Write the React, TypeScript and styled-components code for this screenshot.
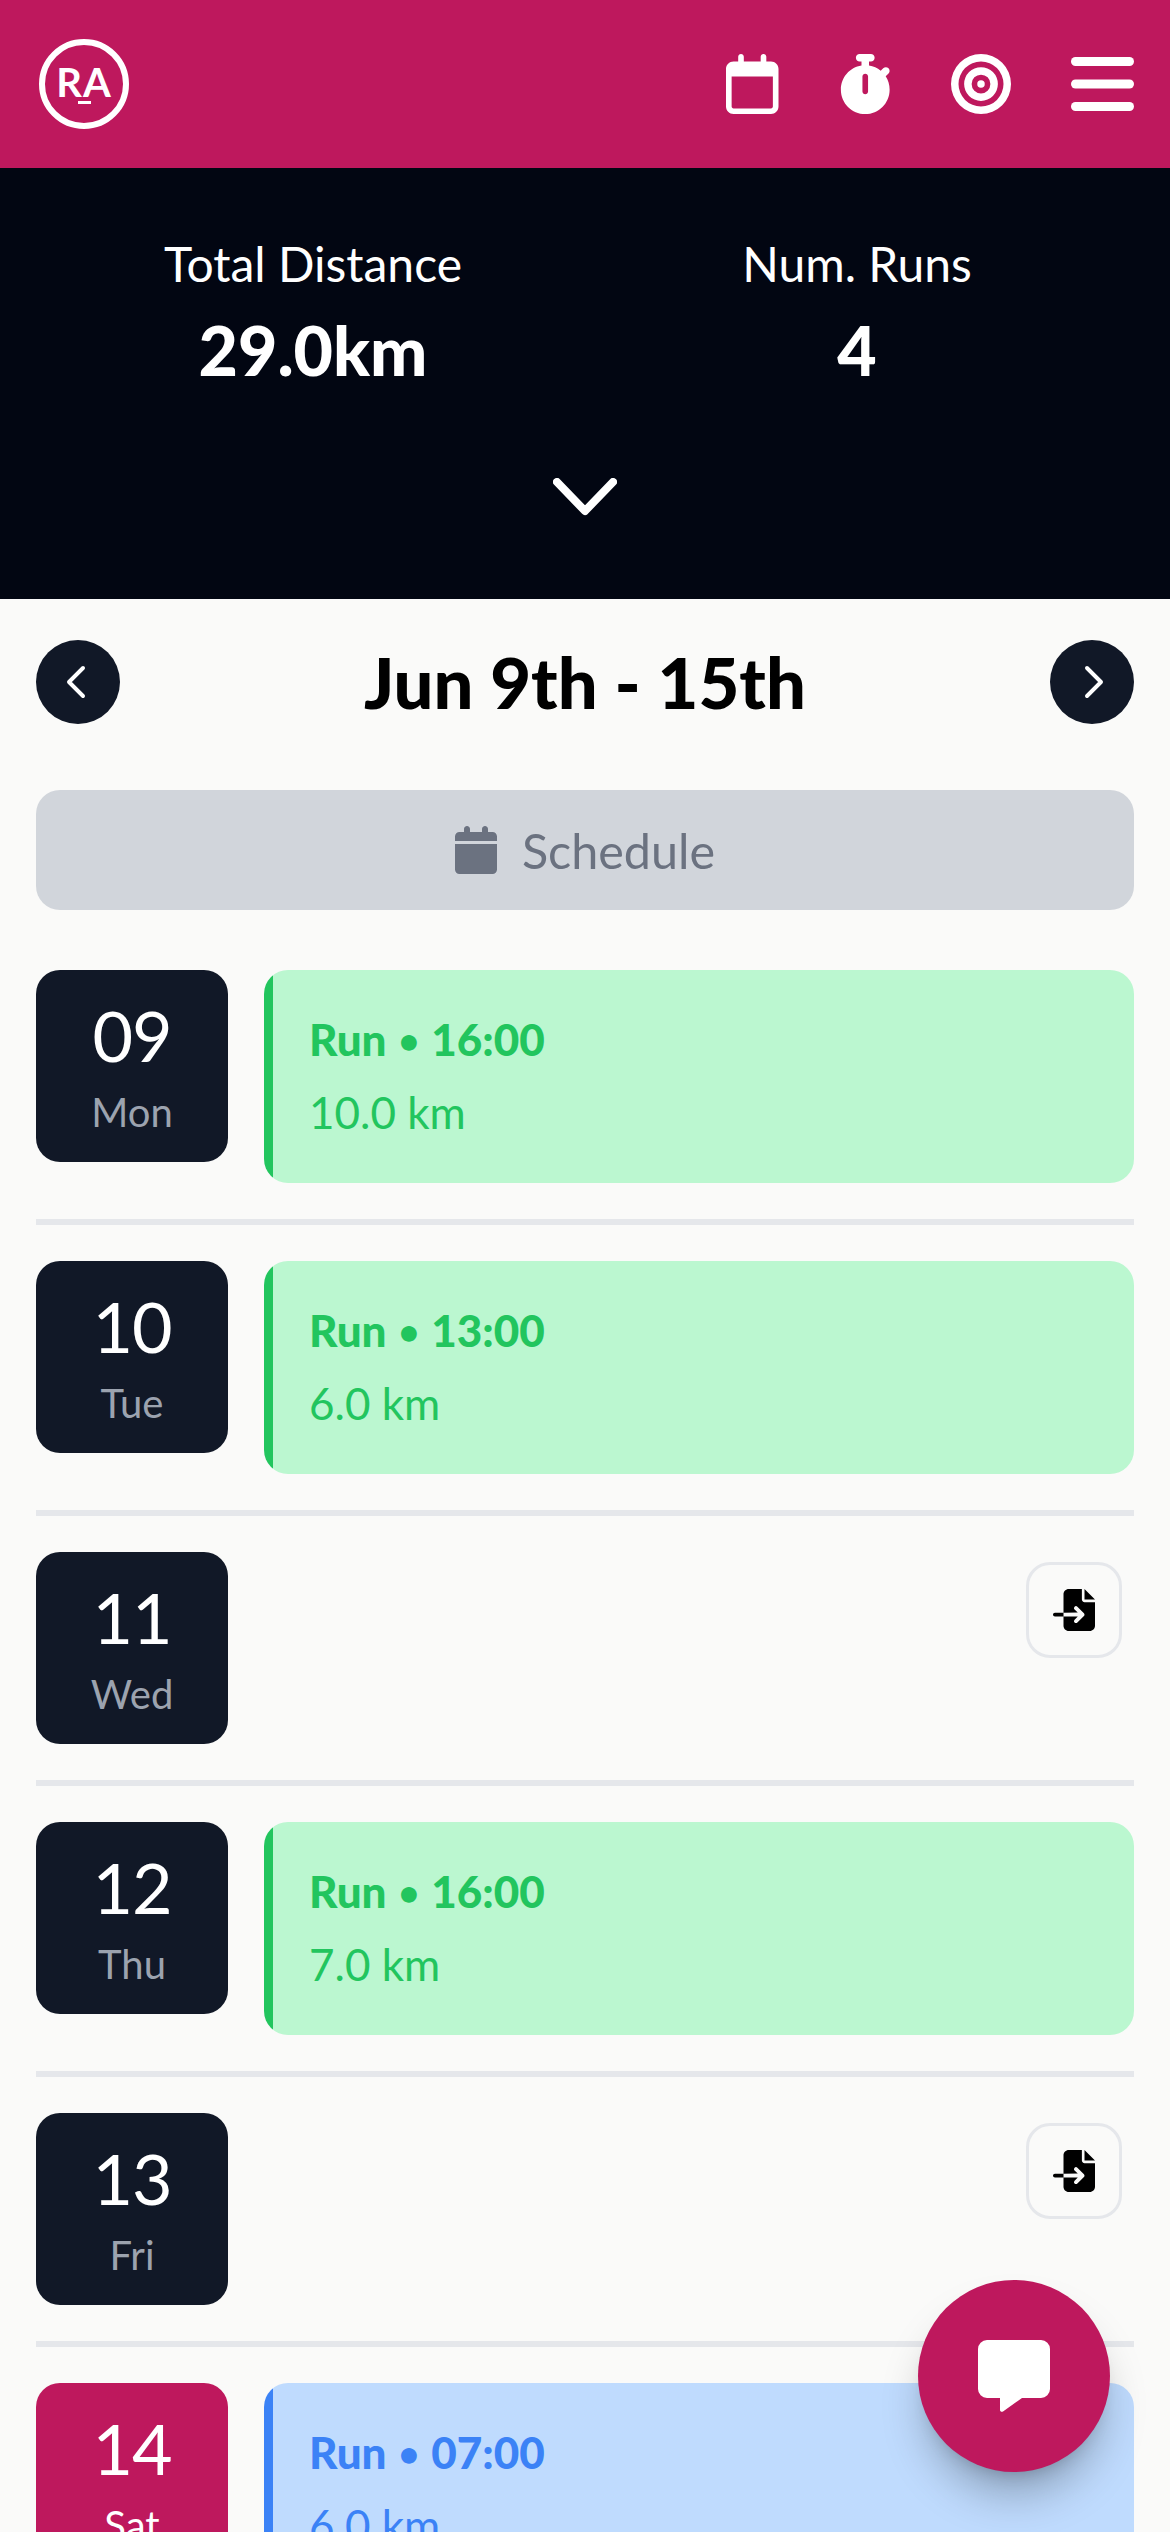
import React from 'react'
import styled, { createGlobalStyle } from 'styled-components'
import { ChevronLeft, ChevronRight } from 'lucide-react'
import { FaCalendar, FaFileImport, FaRegCalendar, FaStopwatch, FaBullseye } from 'react-icons/fa6'

const GlobalStyle = createGlobalStyle`
  html, body {
    margin: 0;
    height: 2532px;
    overflow: hidden;
    background: #fafaf9;
    font-family: 'Lato', 'Noto Sans', sans-serif;
  }
  * {
    box-sizing: border-box;
  }
`

const Page = styled.div`
  position: relative;
  width: 1170px;
  height: 2532px;
  overflow: hidden;
`

const TopBar = styled.header`
  height: 168px;
  background: #be185d;
  padding: 0 36px;
  display: flex;
  align-items: center;
  justify-content: space-between;
  color: #fff;
`

const TopIcons = styled.nav`
  display: flex;
  align-items: center;
  gap: 60px;
`

const CalendarIcon = styled(FaRegCalendar)`
  width: 52.5px;
  height: 60px;
`

const StopwatchIcon = styled(FaStopwatch)`
  width: 52.5px;
  height: 60px;
`

const Summary = styled.section`
  height: 431px;
  background: #020612;
  color: #fff;
  padding: 72px 41px 0;
  display: flex;
  flex-direction: column;
  align-items: center;
`

const StatGrid = styled.div`
  width: 100%;
  display: grid;
  grid-template-columns: 1fr 1fr;
`

const Stat = styled.div`
  text-align: center;
`

const StatLabel = styled.div`
  font-size: 48px;
  line-height: 48px;
`

const StatValue = styled.div`
  margin-top: 22px;
  font-size: 68px;
  line-height: 80px;
  font-weight: 900;
`

const Expand = styled.div`
  margin-top: 88px;
  line-height: 0;
`

const Content = styled.main`
  padding: 41px 36px 0;
`

const WeekNav = styled.div`
  display: flex;
  align-items: center;
  justify-content: space-between;
`

const RoundButton = styled.button<{ $side: 'left' | 'right' }>`
  width: 84px;
  height: 84px;
  padding: ${(p) => (p.$side === 'left' ? '0 4px 0 0' : '0 0 0 4px')};
  border: 0;
  border-radius: 50%;
  background: #111827;
  color: #fff;
  display: flex;
  align-items: center;
  justify-content: center;
`

const WeekTitle = styled.h1`
  margin: 0;
  font-size: 70.5px;
  line-height: 84px;
  font-weight: 900;
  color: #000;
`

const ScheduleButton = styled.button`
  width: 100%;
  height: 120px;
  margin: 66px 0 60px;
  border: 0;
  border-radius: 24px;
  background: #d1d5db;
  color: #6b7280;
  font: inherit;
  font-size: 48.5px;
  display: flex;
  align-items: center;
  justify-content: center;
  gap: 25px;
`

const ScheduleIcon = styled(FaCalendar)`
  width: 42px;
  height: 48px;
`

const DayRow = styled.div`
  display: flex;
  gap: 36px;
  padding-bottom: 36px;
  margin-bottom: 36px;
  border-bottom: 6px solid #e5e7eb;
`

const DateBox = styled.div<{ $today?: boolean }>`
  flex: none;
  width: 192px;
  height: 192px;
  padding-top: 35px;
  border-radius: 24px;
  background: ${(p) => (p.$today ? '#be185d' : '#111827')};
  color: #fff;
  display: flex;
  flex-direction: column;
  align-items: center;
`

const DateNum = styled.div`
  margin-bottom: 23px;
  font-size: 70px;
  line-height: 60px;
  letter-spacing: -1px;
`

const DateName = styled.div<{ $today?: boolean }>`
  font-size: 40px;
  line-height: 48px;
  color: ${(p) => (p.$today ? '#fff' : '#9ca3af')};
`

const RunCard = styled.div<{ $planned?: boolean }>`
  flex: 1;
  height: 213px;
  padding: 33px 36px 0 45px;
  border-radius: 24px;
  background: linear-gradient(
    to right,
    ${(p) => (p.$planned ? '#3b82f6' : '#22c55e')} 9px,
    ${(p) => (p.$planned ? '#bfdbfe' : '#bbf7d0')} 9px
  );
  color: ${(p) => (p.$planned ? '#3b82f6' : '#22c55e')};
  font-size: 44px;
  line-height: 72px;
`

const RunTitle = styled.div`
  font-weight: 900;
`

const Dot = styled.span`
  margin: 0 2px;
  font-size: 34px;
  vertical-align: 3px;
`

const ImportButton = styled.button`
  width: 96px;
  height: 96px;
  margin: 10px 12px 0 auto;
  padding: 0;
  border: 3px solid #e5e7eb;
  border-radius: 24px;
  background: transparent;
  color: #000;
  display: flex;
  align-items: center;
  justify-content: center;
`

const ChatButton = styled.button`
  position: absolute;
  right: 60px;
  bottom: 60px;
  width: 192px;
  height: 192px;
  padding: 0;
  border: 0;
  border-radius: 50%;
  background: #be185d;
  box-shadow: 0 30px 45px -9px rgba(0, 0, 0, 0.28), 0 12px 18px -12px rgba(0, 0, 0, 0.22);
  display: flex;
  align-items: center;
  justify-content: center;
`

const Logo = () => (
  <svg width="96" height="96" viewBox="0 0 96 96">
    <circle cx="48" cy="48" r="42" fill="none" stroke="#fff" strokeWidth="6" />
    <text x="48" y="61" textAnchor="middle" fill="#fff" fontFamily="Lato" fontWeight="700" fontSize="40" letterSpacing="1">
      RA
    </text>
    <rect x="42" y="65" width="13" height="3" fill="#fff" />
  </svg>
)

const BarsIcon = () => (
  <svg width="63" height="60" viewBox="0 0 63 60" fill="#fff">
    <rect y="3" width="63" height="9" rx="4.5" />
    <rect y="25.5" width="63" height="9" rx="4.5" />
    <rect y="48" width="63" height="9" rx="4.5" />
  </svg>
)

const ChatIcon = () => (
  <svg width="72" height="72" viewBox="0 0 72 72" fill="#fff">
    <path d="M9 0h54a9 9 0 0 1 9 9v40a9 9 0 0 1-9 9H44L25 71.5c-1.3.9-3 0-3-1.5V58H9a9 9 0 0 1-9-9V9a9 9 0 0 1 9-9z" />
  </svg>
)

const days = [
  { num: '09', name: 'Mon', run: { time: '16:00', km: '10.0 km' } },
  { num: '10', name: 'Tue', run: { time: '13:00', km: '6.0 km' } },
  { num: '11', name: 'Wed' },
  { num: '12', name: 'Thu', run: { time: '16:00', km: '7.0 km' } },
  { num: '13', name: 'Fri' },
  { num: '14', name: 'Sat', today: true, run: { time: '07:00', km: '6.0 km', planned: true } },
]

const App = () => (
  <Page>
    <GlobalStyle />
    <TopBar>
      <Logo />
      <TopIcons>
        <CalendarIcon />
        <StopwatchIcon />
        <FaBullseye size={60} />
        <BarsIcon />
      </TopIcons>
    </TopBar>
    <Summary>
      <StatGrid>
        <Stat>
          <StatLabel>Total Distance</StatLabel>
          <StatValue>29.0km</StatValue>
        </Stat>
        <Stat>
          <StatLabel>Num. Runs</StatLabel>
          <StatValue>4</StatValue>
        </Stat>
      </StatGrid>
      <Expand>
        <svg width="64" height="38" viewBox="0 0 64 38" fill="none" stroke="#fff" strokeWidth="8" strokeLinecap="round" strokeLinejoin="round">
          <polyline points="4,4 32,33 60,4" />
        </svg>
      </Expand>
    </Summary>
    <Content>
      <WeekNav>
        <RoundButton $side="left">
          <ChevronLeft size={56} strokeWidth={1.7} />
        </RoundButton>
        <WeekTitle>Jun 9th - 15th</WeekTitle>
        <RoundButton $side="right">
          <ChevronRight size={56} strokeWidth={1.7} />
        </RoundButton>
      </WeekNav>
      <ScheduleButton>
        <ScheduleIcon />
        Schedule
      </ScheduleButton>
      {days.map((day) => (
        <DayRow key={day.num}>
          <DateBox $today={day.today}>
            <DateNum>{day.num}</DateNum>
            <DateName $today={day.today}>{day.name}</DateName>
          </DateBox>
          {day.run ? (
            <RunCard $planned={day.run.planned}>
              <RunTitle>
                Run <Dot>•</Dot> {day.run.time}
              </RunTitle>
              <div>{day.run.km}</div>
            </RunCard>
          ) : (
            <ImportButton>
              <FaFileImport size={42} />
            </ImportButton>
          )}
        </DayRow>
      ))}
    </Content>
    <ChatButton>
      <ChatIcon />
    </ChatButton>
  </Page>
)

export default App
